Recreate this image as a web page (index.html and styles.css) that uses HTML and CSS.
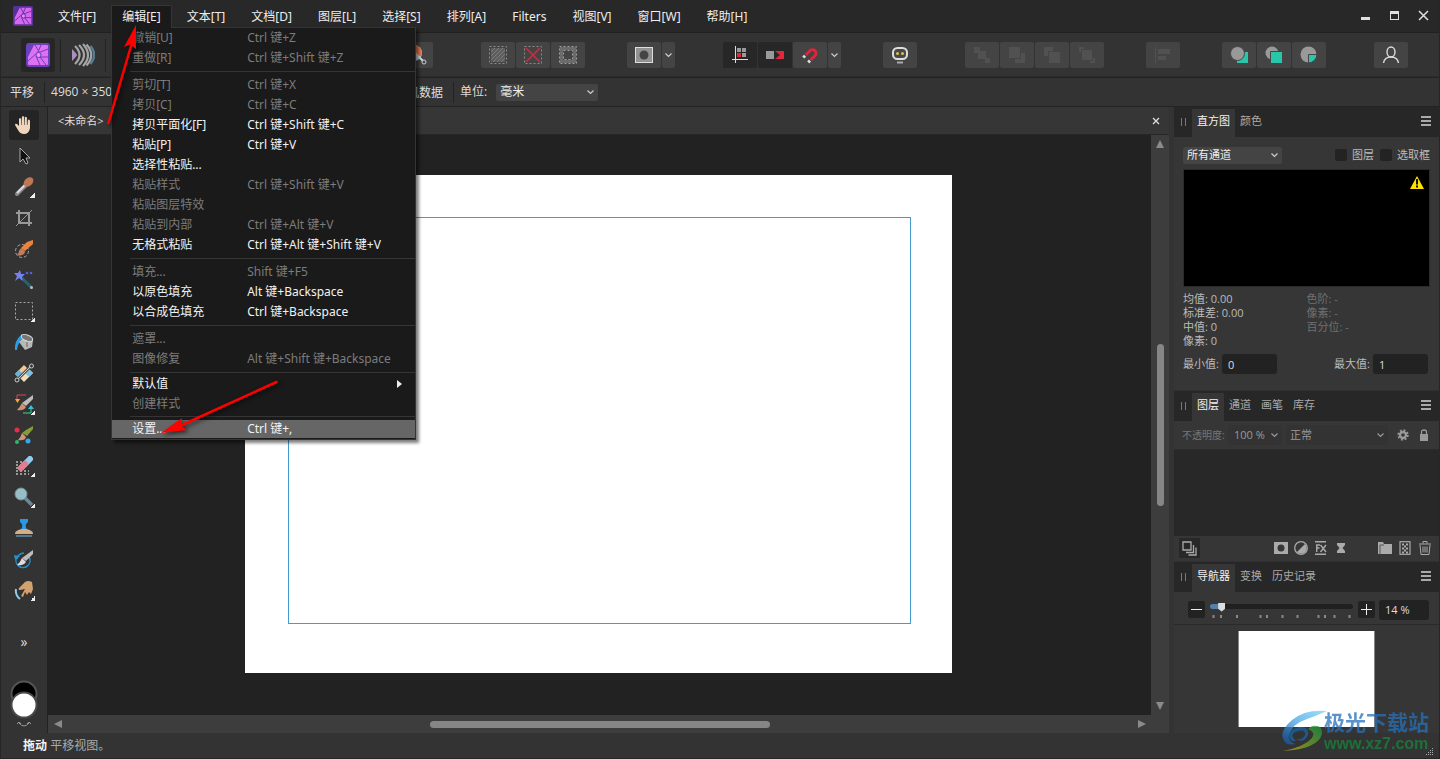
FILE: index.html
```html
<!DOCTYPE html>
<html lang="zh-CN">
<head>
<meta charset="utf-8">
<title>Photo</title>
<link rel="stylesheet" href="styles.css">
</head>
<body>
<div class="app">
  <header class="titlebar">
    <svg class="logo" width="20" height="20" viewBox="0 0 24 24"><rect width="24" height="24" rx="2" fill="#57309a"/><path d="M8 2H22V22H2V14Z" fill="#d767ee"/><g fill="none" stroke="#57309a" stroke-width="1"><path d="M9 2 15 12M22 6 12 10M22 14H12M14 22 10 13M2 18 12 9M15 2 12 9M20 22 14 14"/></g><circle cx="12.500" cy="12" r="2.500" fill="#e58bf5" stroke="#57309a"/></svg>
    <nav class="menubar">
      <button class="menu-title">文件[F]</button>
      <div class="menu-holder">
        <button class="menu-title open">编辑[E]</button>
        <div class="menu" role="menu">
          <button class="mi off"><span>撤销[U]</span><span>Ctrl 键+Z</span></button>
          <button class="mi off"><span>重做[R]</span><span>Ctrl 键+Shift 键+Z</span></button>
          <div class="sep"></div>
          <button class="mi off"><span>剪切[T]</span><span>Ctrl 键+X</span></button>
          <button class="mi off"><span>拷贝[C]</span><span>Ctrl 键+C</span></button>
          <button class="mi"><span>拷贝平面化[F]</span><span>Ctrl 键+Shift 键+C</span></button>
          <button class="mi"><span>粘贴[P]</span><span>Ctrl 键+V</span></button>
          <button class="mi"><span>选择性粘贴...</span></button>
          <button class="mi off"><span>粘贴样式</span><span>Ctrl 键+Shift 键+V</span></button>
          <button class="mi off"><span>粘贴图层特效</span></button>
          <button class="mi off"><span>粘贴到内部</span><span>Ctrl 键+Alt 键+V</span></button>
          <button class="mi"><span>无格式粘贴</span><span>Ctrl 键+Alt 键+Shift 键+V</span></button>
          <div class="sep"></div>
          <button class="mi off"><span>填充...</span><span>Shift 键+F5</span></button>
          <button class="mi"><span>以原色填充</span><span>Alt 键+Backspace</span></button>
          <button class="mi"><span>以合成色填充</span><span>Ctrl 键+Backspace</span></button>
          <div class="sep"></div>
          <button class="mi off"><span>遮罩...</span></button>
          <button class="mi off"><span>图像修复</span><span>Alt 键+Shift 键+Backspace</span></button>
          <div class="sep tight"></div>
          <button class="mi"><span>默认值</span><span></span><svg width="5" height="8" viewBox="0 0 5 8"><path d="M0 0 5 4 0 8Z" fill="#eee"/></svg></button>
          <button class="mi off short"><span>创建样式</span></button>
          <div class="sep"></div>
          <button class="mi hot"><span>设置...</span><span>Ctrl 键+,</span></button>
        </div>
      </div>
      <button class="menu-title">文本[T]</button>
      <button class="menu-title">文档[D]</button>
      <button class="menu-title">图层[L]</button>
      <button class="menu-title">选择[S]</button>
      <button class="menu-title">排列[A]</button>
      <button class="menu-title">Filters</button>
      <button class="menu-title">视图[V]</button>
      <button class="menu-title">窗口[W]</button>
      <button class="menu-title">帮助[H]</button>
    </nav>
    <div class="win">
      <button aria-label="最小化"><svg width="11" height="11" viewBox="0 0 11 11"><path d="M1 7H10V10H1Z" fill="#e0e0e0"/></svg></button>
      <button aria-label="最大化"><svg width="11" height="11" viewBox="0 0 11 11"><path d="M1 1H10V10H1ZM2 4V9H9V4Z" fill="#e0e0e0" fill-rule="evenodd"/></svg></button>
      <button aria-label="关闭"><svg width="11" height="11" viewBox="0 0 11 11"><path d="M1 1 10 10M10 1 1 10" stroke="#e0e0e0" stroke-width="1.500"/></svg></button>
    </div>
  </header>

  <div class="toolbar">
    <div class="personas">
      <button class="persona on" aria-label="Photo"><svg width="24" height="24" viewBox="0 0 24 24"><rect width="24" height="24" rx="3" fill="#6a41bd"/><path d="M8 2H21Q22 2 22 3V21Q22 22 21 22H3Q2 22 2 21V14Z" fill="#df70f3"/><g fill="none" stroke="#6a41bd" stroke-width="1"><path d="M9 2 15 12M22 6 12 10M22 14H12M14 22 10 13M2 18 12 9M15 2 12 9M20 22 14 14"/></g><circle cx="12.500" cy="12" r="2.500" fill="#ee94fa" stroke="#6a41bd"/></svg></button>
      <i class="bar"></i>
      <button class="persona" aria-label="Liquify"><svg width="24" height="24" viewBox="0 0 24 24" fill="none" stroke-width="2.200"><path d="M1 6Q6 11 6 12T1 18Z" fill="#ab8fc2"/><g stroke="#a5a5a5"><path d="M4 3Q13 12 4 21M8 2Q18 12 8 22M12 1Q22 12 12 23M15.500 1.500Q25 12 15.500 22.500"/></g><path d="M19.500 3Q27 12 19.500 21" stroke="#587e94"/></svg></button>
      <i class="bar"></i>
    </div>
    <div class="tools-row">
      <div class="grp"><button class="tb" aria-label="自动"><svg width="24" height="24" viewBox="0 0 24 24"><circle cx="10" cy="10" r="8" fill="#bcd9e5"/><path d="M12 2Q19 5 18 13L12 13Z" fill="#eb7951"/><path d="M8 7 20 19" stroke="#ddd" stroke-width="2"/><circle cx="20" cy="19" r="2" fill="#444" stroke="#ccc"/></svg></button></div>
      <div class="grp g48">
        <button class="tb" aria-label="全选"><svg width="18" height="18" viewBox="0 0 18 18"><path d="M2 2H16V16H2Z" fill="#5d5d5d"/><path d="M2 6 6 2M2 10 10 2M2 14 14 2M4 16 16 4M8 16 16 8M12 16 16 12" stroke="#7c7c7c"/><rect x=".5" y=".5" width="17" height="17" fill="none" stroke="#8b8b8b" stroke-dasharray="2 2"/></svg></button>
        <button class="tb" aria-label="取消选择"><svg width="18" height="18" viewBox="0 0 18 18"><rect x=".5" y=".5" width="17" height="17" fill="none" stroke="#8b8b8b" stroke-dasharray="2 2"/><path d="M2 2 16 16M16 2 2 16" stroke="#cf2b40" stroke-width="1.500"/></svg></button>
        <button class="tb" aria-label="反选"><svg width="18" height="18" viewBox="0 0 18 18"><path d="M1 1H17V17H1ZM4 4V14H14V4Z" fill="#6b6b6b" fill-rule="evenodd"/><g fill="none" stroke="#a0a0a0" stroke-dasharray="2 2"><rect x=".5" y=".5" width="17" height="17"/><rect x="4.500" y="4.500" width="9" height="9"/></g></svg></button>
      </div>
      <div class="grp g42">
        <button class="tb" aria-label="蒙版"><svg width="18" height="16" viewBox="0 0 18 16"><rect x=".5" y=".5" width="17" height="15" fill="#929292" stroke="#ddd"/><circle cx="9" cy="8" r="4.500" fill="#444"/></svg></button>
        <button class="tb slim" aria-label="更多"><svg width="7" height="5" viewBox="0 0 7 5"><path d="M.5 .5 3.500 3.500 6.500 .5" class="chev"/></svg></button>
      </div>
      <div class="grp g48">
        <button class="tb dark" aria-label="对齐网格"><svg width="18" height="18" viewBox="0 0 18 18"><path d="M4.500 0V17M1 13.500H17" stroke="#ddd"/><path d="M6 2H10V6H6ZM11 2H15V6H11ZM11 7H15V11H11Z" fill="#999"/><path d="M6 7H10V11H6Z" fill="#e5263d"/></svg></button>
        <button class="tb dark" aria-label="移动"><svg width="18" height="18" viewBox="0 0 18 18"><path d="M0 5H8V13H0Z" fill="#999"/><path d="M9 5H18V13H9L14 9Z" fill="#e5263d"/></svg></button>
        <button class="tb" aria-label="吸附"><svg width="18" height="18" viewBox="0 0 18 18"><g transform="rotate(45 9 9)"><path d="M6 12V6A3.500 3.500 0 0 1 13 6V12" fill="none" stroke="#e0243b" stroke-width="3"/><path d="M4.500 13H7.500V15.500H4.500ZM11.500 13H14.500V15.500H11.500Z" fill="#ddd"/></g></svg></button>
        <button class="tb slim" aria-label="更多"><svg width="7" height="5" viewBox="0 0 7 5"><path d="M.5 .5 3.500 3.500 6.500 .5" class="chev"/></svg></button>
      </div>
      <div class="grp g42"><button class="tb" aria-label="助手"><svg width="18" height="18" viewBox="0 0 18 18"><rect x="2" y="2" width="14" height="11" rx="4.500" fill="#484848" stroke="#dedede" stroke-width="2"/><circle cx="6.500" cy="7.500" r="1.500" fill="#dbc04a"/><circle cx="11.500" cy="7.500" r="1.500" fill="#dbc04a"/><path d="M6 16.500H12" stroke="#aaa" stroke-width="2"/></svg></button></div>
      <div class="grp g48">
        <button class="tb" disabled aria-label="前移"><svg class="dim" width="18" height="18" viewBox="0 0 18 18"><path d="M1 1H7V7H1ZM5 5H13V13H5ZM12 12H17V17H12Z"/></svg></button>
        <button class="tb" disabled aria-label="上移"><svg class="dim" width="18" height="18" viewBox="0 0 18 18"><path d="M1 1H12V12H1ZM13 7H17V17H7V13H13Z"/></svg></button>
        <button class="tb" disabled aria-label="下移"><svg class="dim" width="18" height="18" viewBox="0 0 18 18"><path d="M1 1H10V5H5V10H1ZM6 6H17V17H6Z"/></svg></button>
        <button class="tb" disabled aria-label="后移"><svg class="dim" width="18" height="18" viewBox="0 0 18 18"><path d="M1 1H6V3H3V6H1ZM4 4H14V14H4ZM15 12H17V17H12V15H15Z"/></svg></button>
      </div>
      <div class="grp g42"><button class="tb" disabled aria-label="对齐"><svg class="dim" width="18" height="18" viewBox="0 0 18 18"><path d="M1 1H2V17H1ZM4 3H16V8H4ZM4 10H12V14H4Z"/></svg></button></div>
      <div class="grp g42">
        <button class="tb" aria-label="相加"><svg width="18" height="18" viewBox="0 0 18 18"><path d="M7 6H18V17H7Z" fill="#28c7aa"/><circle cx="7.500" cy="7.500" r="7" fill="#999" stroke="#444"/></svg></button>
        <button class="tb" aria-label="相减"><svg width="18" height="18" viewBox="0 0 18 18"><circle cx="7" cy="7" r="6.500" fill="#999"/><path d="M5.500 5.500H17.500V17.500H5.500Z" fill="#28c7aa" stroke="#444"/></svg></button>
        <button class="tb" aria-label="相交"><svg width="18" height="18" viewBox="0 0 18 18"><circle cx="8.500" cy="8.500" r="8" fill="#999"/><path d="M8.500 8.500H17A9 9 0 0 1 8.500 17Z" fill="#28c7aa" stroke="#444"/></svg></button>
      </div>
      <div class="grp g48"><button class="tb" aria-label="账户"><svg width="18" height="18" viewBox="0 0 18 18" fill="none" stroke="#ddd" stroke-width="1.400"><ellipse cx="9" cy="6" rx="4" ry="5"/><path d="M1.500 17Q2.500 11 9 11T16.500 17"/></svg></button></div>
    </div>
  </div>

  <div class="context">
    <span class="ctx-name">平移</span>
    <span class="ctx-size">4960 × 3507</span>
    <span class="ctx-cam">相机数据</span>
    <label for="unit">单位:</label>
    <span class="select unit"><select id="unit"><option>毫米</option></select><svg width="7" height="5" viewBox="0 0 7 5"><path d="M.5 .5 3.500 3.500 6.500 .5" class="chev"/></svg></span>
  </div>

  <div class="main">
    <aside class="toolbox">
      <button class="tool on" aria-label="平移"><svg width="20" height="20" viewBox="0 0 20 20"><path d="M5 11V4Q6 2 7 4V9L8 2Q9 0 10 2V9L11 2Q12 1 13 3V10L14 5Q15.500 3.500 16 6V13Q15 19 10 19 6 19 4 15L1 10Q1 8 3 9Z" fill="#eed5bb"/><path d="M7.500 4V10M10.500 2V10M13.300 4V10" stroke="#555" stroke-width=".7"/></svg></button>
      <button class="tool" aria-label="移动"><svg width="20" height="20" viewBox="0 0 20 20"><path d="M6 2V16L9 13 12 18 14 17 12 12H16Z" fill="#111" stroke="#aaa"/></svg></button>
      <button class="tool sub" aria-label="拾色"><svg width="20" height="20" viewBox="0 0 20 20"><path d="M3 17 12 8" stroke="#888" stroke-width="4" stroke-linecap="round"/><path d="M3 16 11 8" stroke="#ddd" stroke-width="2"/><ellipse cx="14.500" cy="5" rx="5.500" ry="4" transform="rotate(-45 14.500 5)" fill="#bd7755"/></svg></button>
      <button class="tool" aria-label="裁剪"><svg width="20" height="20" viewBox="0 0 20 20" fill="none" stroke="#999" stroke-width="2"><path d="M5 2V15H18M2 5H15V18"/><path d="M2 18 18 2" stroke-width="1"/></svg></button>
      <button class="tool" aria-label="选区画笔"><svg width="20" height="20" viewBox="0 0 20 20"><circle cx="8" cy="12" r="6.500" fill="none" stroke="#aaa" stroke-dasharray="3 2"/><path d="M19 1 19 5 11 12 7 9 13 3Z" fill="#ee823b"/><path d="M7 9 11 12Q11 15 8 16 5 17 3 16 5 14 5 12Z" fill="#c17d5c"/></svg></button>
      <button class="tool" aria-label="魔棒"><svg width="20" height="20" viewBox="0 0 20 20"><path d="M8 8 18 18" stroke="#29636d" stroke-width="3"/><circle cx="17.500" cy="17.500" r="1.500" fill="#bbb"/><path d="M6 0 7 4 11 4 8 7 9 11 5 8 1 11 3 6 0 3 4 3Z" fill="#7780ef"/><circle cx="13" cy="3" r="1.300" fill="#5260d9"/><circle cx="17" cy="3" r="1.300" fill="#5260d9"/></svg></button>
      <button class="tool sub" aria-label="矩形选框"><svg width="20" height="20" viewBox="0 0 20 20"><rect x="1.500" y="1.500" width="17" height="17" fill="none" stroke="#aaa" stroke-dasharray="2 2"/></svg></button>
      <button class="tool" aria-label="填充"><svg width="20" height="20" viewBox="0 0 20 20"><path d="M1 18Q0 9 8 2L11 4Q4 9 3 18Z" fill="#2a9de3"/><path d="M5 10 12 3 19 8 18 15 11 18Z" fill="#b8b8b8"/><ellipse cx="13" cy="6" rx="6" ry="3" transform="rotate(20 13 6)" fill="#777" stroke="#ddd"/><path d="M13 10V15" stroke="#666"/></svg></button>
      <button class="tool" aria-label="渐变"><svg width="20" height="20" viewBox="0 0 20 20"><path d="M1 11 10 2 14 6 5 15Z" fill="#f1c991"/><path d="M1 11 5 7 9 11 5 15Z" fill="#65b6df"/><path d="M6 15 15 6 19 10 10 19Z" fill="#f4ddb8"/><path d="M11 10 15 6 19 10 15 14Z" fill="#79c1e5"/><path d="M3 17 17 3" stroke="#555" stroke-width="3"/><path d="M3 17 17 3" stroke="#ccc"/><circle cx="3" cy="17" r="2" fill="#333" stroke="#ccc"/><circle cx="17.500" cy="3" r="2" fill="#333" stroke="#ccc"/></svg></button>
      <button class="tool sub" aria-label="调色画笔"><svg width="20" height="20" viewBox="0 0 20 20"><path d="M12 1H3V5" fill="none" stroke="#e83e5b"/><path d="M1 5H6L3.500 9Z" fill="#efae38"/><path d="M9 19H17V14" fill="none" stroke="#39d693"/><path d="M14 15H20L17 11Z" fill="#35c1df"/><path d="M19 1V5L12 12 8 9Z" fill="#bcbcbc"/><path d="M8 9 12 13Q10 17 3 16 6 13 8 9Z" fill="#cb9276"/></svg></button>
      <button class="tool" aria-label="混合画笔"><svg width="20" height="20" viewBox="0 0 20 20"><circle cx="3" cy="5" r="2.500" fill="#e42d49"/><circle cx="3" cy="17" r="2" fill="#36b467"/><circle cx="14" cy="16" r="2.500" fill="#35a9ec"/><path d="M19 1V4L13 11 8 8 12 5Z" fill="#879c35"/><path d="M8 8 12 12Q11 16 4 15 7 12 8 8Z" fill="#d2977b"/></svg></button>
      <button class="tool sub" aria-label="橡皮擦"><svg width="20" height="20" viewBox="0 0 20 20"><path d="M2 6H9M2 9H8M2 12H6M2 15H15M2 18H15" stroke="#999" stroke-width="2" stroke-dasharray="2 2"/><path d="M7 12 16 3" stroke="#92cbed" stroke-width="6" stroke-linecap="round"/><path d="M7 12 11 8" stroke="#e87a8c" stroke-width="6" stroke-linecap="round"/></svg></button>
      <button class="tool sub" aria-label="减淡"><svg width="20" height="20" viewBox="0 0 20 20"><path d="M10 10 18 18" stroke="#6c8797" stroke-width="3.500"/><circle cx="7" cy="7" r="6" fill="#98bdc5" stroke="#6c949e"/></svg></button>
      <button class="tool" aria-label="克隆"><svg width="20" height="20" viewBox="0 0 20 20"><path d="M6 1H14V4L12 6Q11 10 14 12H6Q9 10 8 6L6 4Z" fill="#2999e5"/><path d="M1 15Q3 11 10 11T19 15V16H1Z" fill="#d2ad86"/><path d="M2 17H18V19H2Z" fill="#52778e"/></svg></button>
      <button class="tool" aria-label="撤销画笔"><svg width="20" height="20" viewBox="0 0 20 20"><path d="M3 8A7 7 0 1 0 15 8M3 10A7 7 0 0 1 10 4" fill="none" stroke="#268fd0" stroke-width="1.500"/><path d="M0 6 6 7 1 11Z" fill="#268fd0"/><path d="M19 1V5L12 12 8 9Z" fill="#bcbcbc"/><path d="M8 9 12 13Q9 17 3 16 6 14 8 9Z" fill="#ddd"/></svg></button>
      <button class="tool sub" aria-label="涂抹"><svg width="20" height="20" viewBox="0 0 20 20"><path d="M2 9Q1 15 6 19" fill="none" stroke="#91cbea" stroke-width="2"/><path d="M7 16 11 9 6 10Q4 10 5 8L11 2Q14 0 18 2L19 9 17 14 15 12 13 15 11 12 9 17Z" fill="#d2a16e"/></svg></button>
      <button class="more" aria-label="更多工具">»</button>
      <div class="colors">
        <svg width="30" height="48" viewBox="0 0 30 48"><circle cx="15" cy="14" r="12.500" fill="#000" stroke="#565656" stroke-width="2"/><circle cx="15" cy="25" r="12.500" fill="#fff" stroke="#4a4a4a" stroke-width="2"/><path d="M10 43Q15 49 20 43M8 44 10 42 12 44M18 44 20 42 22 44" fill="none" stroke="#999"/></svg>
      </div>
    </aside>

    <section class="doc">
      <div class="doc-tabs"><div class="doc-tab">&lt;未命名&gt;</div><button class="doc-close" aria-label="关闭文档"><svg width="8" height="8" viewBox="0 0 8 8"><path d="M1 1 7 7M7 1 1 7" stroke="#ddd" stroke-width="1.300"/></svg></button></div>
      <div class="view">
        <div class="canvas"><div class="page"><div class="margins"></div></div></div>
        <div class="vscroll"><svg width="8" height="8" viewBox="0 0 8 8"><path d="M4 0 8 8H0Z" fill="#8b8b8b"/></svg><div class="vtrack"><div class="vthumb"></div></div><svg width="8" height="8" viewBox="0 0 8 8"><path d="M0 0H8L4 8Z" fill="#8b8b8b"/></svg></div>
      </div>
      <div class="hscroll"><svg width="8" height="8" viewBox="0 0 8 8"><path d="M8 0V8L0 4Z" fill="#8b8b8b"/></svg><div class="htrack"><div class="hthumb"></div></div><svg width="8" height="8" viewBox="0 0 8 8"><path d="M0 0 8 4 0 8Z" fill="#8b8b8b"/></svg></div>
    </section>

    <aside class="side">
      <section class="panel histo">
        <div class="ptabs"><i class="grip"></i><button class="ptab on">直方图</button><button class="ptab">颜色</button><button class="burger" aria-label="选项"></button></div>
        <div class="histo-body">
          <div class="chan">
            <span class="select"><select aria-label="通道"><option>所有通道</option></select><svg width="7" height="5" viewBox="0 0 7 5"><path d="M.5 .5 3.500 3.500 6.500 .5" class="chev"/></svg></span>
            <label class="check push"><input type="checkbox">图层</label>
            <label class="check"><input type="checkbox">选取框</label>
          </div>
          <div class="graph"><svg width="14" height="13" viewBox="0 0 14 13"><path d="M7 0 14 13H0Z" fill="#ffe100"/><path d="M7 3V8.500M7 9.500V11.500" stroke="#111" stroke-width="2"/></svg></div>
          <div class="stats">
            <div>均值: 0.00<br>标准差: 0.00<br>中值: 0<br>像素: 0</div>
            <div class="faint">色阶: -<br>像素: -<br>百分位: -</div>
          </div>
          <div class="range"><label for="mn">最小值:</label><input id="mn" value="0"><label class="push" for="mx">最大值:</label><input id="mx" value="1"></div>
        </div>
      </section>

      <section class="panel layers">
        <div class="ptabs"><i class="grip"></i><button class="ptab on">图层</button><button class="ptab">通道</button><button class="ptab">画笔</button><button class="ptab">库存</button><button class="burger" aria-label="选项"></button></div>
        <div class="blend">
          <label for="op">不透明度:</label>
          <span class="select flat opac"><select id="op"><option>100 %</option></select><svg width="7" height="5" viewBox="0 0 7 5"><path d="M.5 .5 3.500 3.500 6.500 .5" class="chev"/></svg></span>
          <span class="select flat mode"><select aria-label="混合模式"><option>正常</option></select><svg width="7" height="5" viewBox="0 0 7 5"><path d="M.5 .5 3.500 3.500 6.500 .5" class="chev"/></svg></span>
          <button class="ib" aria-label="设置"><svg width="12" height="12" viewBox="0 0 12 12" fill="none" stroke="#999"><circle cx="6" cy="6" r="3" stroke-width="2.400"/><circle cx="6" cy="6" r="4.800" stroke-width="1.800" stroke-dasharray="1.885 1.885"/></svg></button>
          <button class="ib" aria-label="锁定"><svg width="12" height="12" viewBox="0 0 12 12"><path d="M3.500 6V3Q3.500 1 6 1T8.500 3V6" fill="none" stroke="#999" stroke-width="1.300"/><path d="M2 5H10V12H2Z" fill="#999"/></svg></button>
        </div>
        <div class="list"></div>
        <div class="layer-tools">
          <button class="ib stack" aria-label="图层叠放"><svg width="15" height="15" viewBox="0 0 15 15" fill="none" stroke="#aaa" stroke-width="1.300"><path d="M1 1H9V9H1Z"/><path d="M11.500 4V11.500H4M14 6.500V14H6.500"/></svg></button>
          <div class="iset push">
            <button class="ib" aria-label="蒙版"><svg width="14" height="14" viewBox="0 0 14 14"><path d="M0 1H14V13H0Z" fill="#aaa"/><circle cx="7" cy="7" r="3.500" fill="#363636"/></svg></button>
            <button class="ib" aria-label="调整"><svg width="14" height="14" viewBox="0 0 14 14"><circle cx="7" cy="7" r="6.300" fill="none" stroke="#aaa" stroke-width="1.300"/><path d="M11 3A5.500 5.500 0 0 1 3 11Z" fill="#aaa"/></svg></button>
            <button class="ib" aria-label="效果"><svg width="14" height="14" viewBox="0 0 14 14" fill="none" stroke="#aaa" stroke-width="1.400"><path d="M1 .7H12M1 13.300H12M2.700 11V4H6M2.700 7H5.500M6.500 4 12 11M12 4 6.500 11"/></svg></button>
            <button class="ib" aria-label="实时滤镜"><svg width="14" height="14" viewBox="0 0 14 14"><path d="M3 2H11V4L8.500 7 11 10V12H3V10L5.500 7 3 4Z" fill="#aaa"/></svg></button>
          </div>
          <div class="iset far">
            <button class="ib" aria-label="编组"><svg width="14" height="14" viewBox="0 0 14 14"><path d="M0 1H5L6 3H14V13H0Z" fill="#aaa"/><path d="M2 13V4H6" fill="none" stroke="#555"/></svg></button>
            <button class="ib" aria-label="像素图层"><svg width="14" height="14" viewBox="0 0 14 14"><rect x="2" y=".7" width="10" height="12.600" fill="none" stroke="#aaa" stroke-width="1.200"/><path d="M4 3.500H10M4 7.500H10M4 11.500H10" stroke="#aaa" stroke-width="2" stroke-dasharray="2 2"/><path d="M6 5.500H8M6 9.500H8" stroke="#aaa" stroke-width="2"/></svg></button>
            <button class="ib" aria-label="删除"><svg width="14" height="14" viewBox="0 0 14 14" fill="none" stroke="#aaa"><path d="M2 4 3 13.500H11L12 4M1 3H13M5 2.500V.5H9V2.500M5 5.500V11.500M7 5.500V11.500M9 5.500V11.500"/></svg></button>
          </div>
        </div>
      </section>

      <section class="panel nav">
        <div class="ptabs"><i class="grip"></i><button class="ptab on">导航器</button><button class="ptab">变换</button><button class="ptab">历史记录</button><button class="burger" aria-label="选项"></button></div>
        <div class="zoom">
          <button class="step" aria-label="缩小"><svg width="11" height="11" viewBox="0 0 11 11"><path d="M0 5.500H11" stroke="#eee"/></svg></button>
          <div class="slide">
            <input type="range" min="0" max="100" value="6" aria-label="缩放">
            <svg viewBox="0 0 142 3" height="3"><path d="M2 0H4V3H2ZM49 0H51V3H49ZM71 0H73V3H71ZM86 0H88V3H86ZM107 0H109V3H107ZM123 0H125V3H123ZM138 0H140V3H138Z" fill="#888"/><path d="M10 0H11V3H10ZM26 0H27V3H26ZM56 0H57V3H56ZM114 0H115V3H114Z" fill="#ddd"/></svg>
          </div>
          <button class="step" aria-label="放大"><svg width="11" height="11" viewBox="0 0 11 11"><path d="M0 5.500H11M5.500 0V11" stroke="#eee"/></svg></button>
          <input class="pct" aria-label="缩放比例" value="14 %">
        </div>
        <div class="thumb-wrap"><div class="thumb"></div></div>
      </section>
    </aside>
  </div>

  <footer class="status"><b>拖动</b>&nbsp;平移视图。
    <svg class="resize" width="8" height="8" viewBox="0 0 8 8"><path d="M6 0H7V1H6ZM4 2H5V3H4ZM6 2H7V3H6ZM2 4H3V5H2ZM4 4H5V5H4ZM6 4H7V5H6ZM0 6H1V7H0ZM2 6H3V7H2ZM4 6H5V7H4ZM6 6H7V7H6Z" fill="#aaa"/></svg>
  </footer>

  <svg class="marks" width="300" height="450" viewBox="0 0 300 450">
    <g class="mark"><path d="M108.500 123 131 46" stroke="#f00" stroke-width="2.500" stroke-linecap="round"/><path d="M136 25 124 47 130 44.500 136 49Z" fill="#f00"/></g>
    <g class="mark"><path d="M276.500 382 182 425" stroke="#f00" stroke-width="2.500" stroke-linecap="round"/><path d="M161 433 182 418 181 425.500 187 430Z" fill="#f00"/></g>
  </svg>
  <div class="brand">
    <svg width="48" height="44" viewBox="0 0 48 44"><defs><linearGradient id="bl" x1="1" y1="0" x2="0" y2="1"><stop offset="0" stop-color="#7fd4ff"/><stop offset=".5" stop-color="#45a5e5"/><stop offset="1" stop-color="#114f9e"/></linearGradient><linearGradient id="gr" x1="1" y1="0" x2="0" y2="1"><stop offset="0" stop-color="#149441"/><stop offset="1" stop-color="#c2ad18"/></linearGradient></defs><path d="M47 2Q25 0 12 11-2 23 4 32 7 37 15 35 7 32 9 26 12 15 27 10 36 7 47 2Z" fill="url(#bl)"/><path d="M16 32Q8 25 18 22 26 20 25 26 23 31 16 30 24 35 28 26 29 17 20 18 8 20 9 28 10 33 16 32Z" fill="#1764a8"/><path d="M32 17Q43 15 42 25 38 40 3 42 24 38 32 29 36 23 28 20Z" fill="url(#gr)"/></svg>
    <div class="brand-text"><span>极光下载站</span><a href="#">www.xz7.com</a></div>
  </div>
</div>
</body>
</html>
```
FILE: styles.css
```css
* { box-sizing: border-box; }
body { margin: 0; background: #222; color: #ddd; font: 12px/16px "Open Sans", "Noto Sans CJK SC", sans-serif; }
button, input, select { font: inherit; color: inherit; margin: 0; padding: 0; border: 0; background: none; border-radius: 0; }
button { display: flex; align-items: center; justify-content: center; white-space: nowrap; }
svg { display: block; flex: none; }
.chev { fill: none; stroke: #ccc; stroke-width: 1.2; }
.push { margin-left: auto; }

.app { position: relative; display: flex; flex-direction: column; min-height: 100vh; border: solid #262626; border-width: 0 1px 1px; background: #333; overflow: hidden; }

.titlebar { display: flex; align-items: center; height: 33px; padding: 0 5px 0 12px; background: #282828; border-bottom: 1px solid #212121; }
.menubar { display: flex; align-items: flex-start; align-self: stretch; margin-left: 12px; padding-top: 5px; font-family: "Noto Sans", "Noto Sans CJK SC", sans-serif; }
.menu-title { height: 23px; padding: 0 12px; color: #eee; border: 1px solid transparent; border-bottom: 0; }
.menu-holder { position: relative; margin: 0 2px; }
.menu-title.open { position: relative; z-index: 3; padding: 0 10px; background: #1a1a1a; border-color: #353535; }
.menu { position: absolute; z-index: 2; left: 0; top: 22px; width: 305px; padding-bottom: 1px; background: #1a1a1a; border: 1px solid #353535; box-shadow: 3px 3px 3px rgba(0, 0, 0, .5); }
.mi { width: 100%; height: 20px; padding: 0 13px 0 20px; justify-content: flex-start; color: #f2f2f2; text-align: left; }
.mi span:first-child { width: 115px; }
.mi svg { margin-left: auto; }
.mi.off { color: #7c7c7c; }
.mi.short { height: 19px; }
.mi.hot { height: 18px; background: #666; }
.sep { height: 7px; margin-left: 18px; border-bottom: 3px solid transparent; box-shadow: inset 0 -1px #353535; }
.sep.tight { height: 5px; border-bottom-width: 1px; }
.win { display: flex; margin: 0 0 2px auto; gap: 7px; }
.win button { width: 22px; height: 22px; }

.toolbar { display: flex; align-items: center; height: 45px; padding: 0 31px 0 20px; border-bottom: 1px solid #232323; box-shadow: inset 0 -1px #2c2c2c; }
.personas { display: flex; align-items: center; gap: 5px; }
.persona { width: 34px; height: 34px; border-radius: 3px; }
.persona.on { background: #262626; }
.bar { width: 1px; height: 33px; background: #222; }
.tools-row { display: flex; flex: 1; justify-content: flex-end; }
.grp { display: flex; gap: 1px; }
.g42 { margin-left: 42px; }
.g48 { margin-left: 48px; }
.tb { width: 34px; height: 26px; border-radius: 2px; background: #444; }
.tb.slim { width: 13px; }
.tb.dark { background: #272727; }
.dim { fill: #515151; }

.context { display: flex; align-items: center; height: 29px; padding-left: 9px; border-bottom: 1px solid #232323; }
.ctx-name { padding-right: 10px; line-height: 21px; border-right: 1px solid #222; }
.ctx-size { width: 350px; padding-left: 6px; }
.ctx-cam { padding-right: 10px; line-height: 21px; border-right: 1px solid #222; }
.context label { margin: 0 9px 0 6px; }
.select { position: relative; display: flex; height: 17px; border-radius: 2px; background: #444; color: #eee; }
.select select { flex: 1; width: 100%; padding: 0 16px 0 4px; appearance: none; }
.select svg { position: absolute; right: 4px; top: 50%; margin-top: -2px; pointer-events: none; }
.unit { width: 102px; }

.main { display: flex; flex: 1; min-height: 0; }
.toolbox { display: flex; flex-direction: column; align-items: center; gap: 1px; width: 47px; padding-top: 3px; border-right: 1px solid #222; }
.tool { position: relative; width: 30px; height: 30px; border-radius: 3px; }
.tool.on { background: #242424; }
.tool.sub::after { content: ""; position: absolute; right: 4px; bottom: 4px; width: 5px; height: 5px; background: linear-gradient(135deg, transparent 50%, #eee 50%); }
.more { margin-top: 26px; width: 30px; height: 20px; font-size: 14px; }
.colors { margin-top: auto; padding-bottom: 5px; }

.doc { display: flex; flex-direction: column; flex: 1; min-width: 0; }
.doc-tabs { display: flex; align-items: center; justify-content: space-between; height: 28px; padding: 1px 8px 1px 1px; background: #363636; border-bottom: 1px solid #272727; font-size: 11px; }
.doc-tab { padding-left: 9px; line-height: 26px; }
.doc-close { width: 10px; height: 10px; }
.view { display: flex; flex: 1; min-height: 0; }
.canvas { flex: 1; display: flex; align-items: center; justify-content: center; padding: 0 2px 2px 0; background: #222; }
.page { width: 64.2%; aspect-ratio: 707 / 499; padding: 42px 41px 49px 43px; background: #fff; }
.margins { height: 100%; border: 1px solid #439bd0; }
.vscroll { display: flex; flex-direction: column; align-items: center; width: 18px; padding: 5px 0; background: #3d3d3d; }
.vtrack { flex: 1; display: flex; padding: 196px 0; }
.vthumb { width: 7px; border-radius: 4px; background: #868686; }
.hscroll { display: flex; align-items: center; height: 18px; padding: 0 23px 0 6px; background: #3d3d3d; }
.htrack { flex: 1; }
.hthumb { width: 31.6%; height: 7px; margin-left: 34.2%; border-radius: 4px; background: #868686; }

.side { display: flex; flex-direction: column; width: 270px; padding-left: 5px; font-size: 11px; line-height: 14px; }
.panel { display: flex; flex-direction: column; background: #363636; }
.ptabs { display: flex; align-items: stretch; height: 30px; padding: 2px 8px 0 6px; background: #272727; }
.grip { width: 5px; height: 8px; margin: 9px 6px 0 1px; border: solid #777; border-width: 0 1px; }
.ptab { padding: 0 5px 4px; color: #aaa; }
.ptab.on { color: #f2f2f2; background: #363636; }
.burger { width: 10px; height: 10px; margin: 7px 0 0 auto; background: linear-gradient(#aaa 2px, transparent 2px) 0 0 / 10px 4px; }
.histo { height: 284px; border-bottom: 1px solid #303030; }
.histo-body { padding: 10px 9px 0; color: #bbb; }
.chan { display: flex; align-items: center; height: 16px; gap: 6px; }
.chan .select { width: 99px; }
.check { display: flex; align-items: center; gap: 5px; }
.check input { appearance: none; width: 12px; height: 12px; border-radius: 2px; background: #232323; }
.graph { display: flex; justify-content: flex-end; align-items: flex-start; height: 118px; margin-top: 6px; padding: 6px 5px; background: #000; border: 1px solid #2a2a2a; }
.stats { display: grid; grid-template-columns: 1fr 1fr; margin-top: 5px; }
.faint { color: #707070; }
.range { display: flex; align-items: center; gap: 3px; margin-top: 6px; padding-right: 2px; }
.range input { width: 55px; height: 20px; padding-left: 6px; border-radius: 3px; background: #222; color: #ddd; }
.blend { display: flex; align-items: center; height: 29px; padding: 0 9px 0 8px; gap: 4px; color: #777; border-bottom: 1px solid #2c2c2c; }
.blend label { width: 42px; font-size: 10px; white-space: nowrap; }
.select.flat { height: 20px; background: #333; color: #999; border-radius: 3px; }
.opac { width: 55px; }
.mode { width: 104px; }
.opac select { padding: 0 0 0 6px; }
.flat .chev { stroke: #999; }
.ib { width: 20px; height: 20px; }
.blend .ib { width: 12px; margin-left: 5px; }
.list { height: 86px; background: #282828; }
.layer-tools { display: flex; align-items: center; height: 25px; padding: 0 4px 1px 5px; }
.stack { width: 21px; background: #282828; }
.iset { display: flex; }
.iset.far { margin-left: 24px; }
.nav { flex: 1; border-top: 1px solid #303030; }
.zoom { display: flex; align-items: center; height: 33px; padding: 3px 10px 0 14px; border-bottom: 1px solid #2a2a2a; }
.step { width: 17px; height: 17px; border-radius: 2px; background: #222; }
.slide { flex: 1; margin: 0 5px; }
.slide svg { width: 100%; margin-top: 4px; }
.slide input { display: block; width: 100%; height: 10px; appearance: none; }
.slide input::-webkit-slider-runnable-track { height: 5px; border-radius: 3px; background: linear-gradient(90deg, #5480ab 8%, #202020 8%); }
.slide input::-webkit-slider-thumb { appearance: none; width: 7px; height: 9px; margin-top: -1px; background: #ddd; clip-path: polygon(0 0, 100% 0, 100% 70%, 50% 100%, 0 70%); }
.pct { width: 50px; height: 20px; margin-left: 4px; padding-left: 6px; border-radius: 3px; background: #222; color: #ddd; }
.thumb-wrap { display: flex; justify-content: center; padding: 6px 0; }
.thumb { width: 137px; height: 96px; background: #fff; border: solid #888; border-width: 0 1px; }

.status { display: flex; align-items: center; height: 25px; padding: 0 5px 0 22px; color: #aaa; }
.status b { color: #f2f2f2; }
.resize { margin: 12px 0 0 auto; }
.marks { position: absolute; z-index: 5; left: -1px; top: 0; pointer-events: none; }
.mark { filter: drop-shadow(2px 2px 2px rgba(0, 0, 0, .6)); }
.brand { position: absolute; z-index: 4; right: 7px; bottom: 5px; display: flex; opacity: .75; }
.brand-text { display: flex; flex-direction: column; width: 108px; margin-left: -4px; font: bold 21px/24px "Noto Sans CJK SC", sans-serif; color: #2670bb; white-space: nowrap; }
.brand-text a { padding-top: 2px; font: bold 16px/18px "Liberation Sans", sans-serif; color: #19843c; text-decoration: none; }
```
